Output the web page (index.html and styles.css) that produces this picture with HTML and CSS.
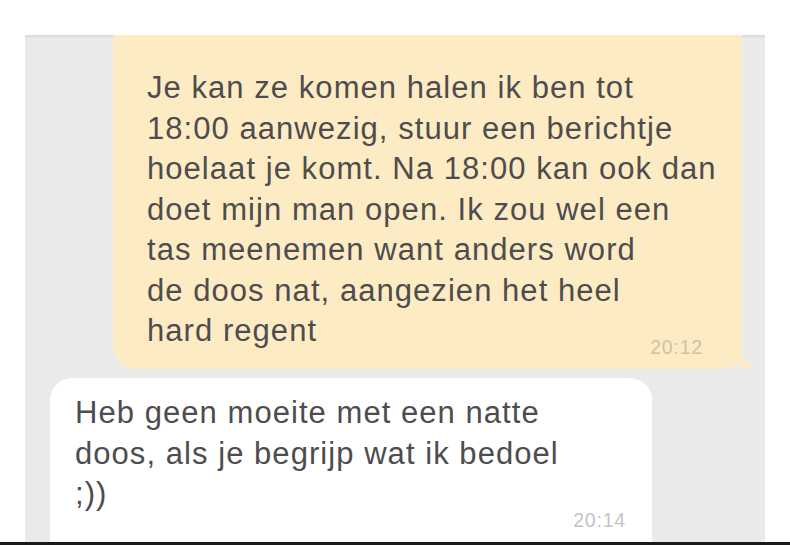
FILE: index.html
```html
<!DOCTYPE html>
<html>
<head>
    <title>Berichten</title>
    <meta charset="utf-8" />
    <link rel="stylesheet" href="styles.css">
</head>
<body>
    <div class="screen">
        <div class="panel">
            <div class="bubble sent">
                <p class="text">Je kan ze komen halen ik ben tot<br>18:00 aanwezig, stuur een berichtje<br>hoelaat je komt. Na 18:00 kan ook dan<br>doet mijn man open. Ik zou wel een<br>tas meenemen want anders word<br>de doos nat, aangezien het heel<br>hard regent</p>
                <span class="time">20:12</span>
            </div>
            <div class="bubble received">
                <p class="text">Heb geen moeite met een natte<br>doos, als je begrijp wat ik bedoel<br>;))</p>
                <span class="time">20:14</span>
            </div>
        </div>
        <div class="bottom-line"></div>
    </div>
</body>
</html>
```
FILE: styles.css
```css
body {
    margin: 0;
    background-color: #fff;
    font-family: 'Liberation Sans', Arial, sans-serif;
}
.screen {
    height: 545px;
    display: flex;
    flex-direction: column;
    padding-top: 35px;
    box-sizing: border-box;
}
.panel {
    flex: 1;
    margin: 0 25px;
    background-color: #ebeaeb;
    box-shadow: inset 0 4px 3px -2px rgba(0, 0, 0, 0.08);
    overflow: hidden;
    display: flex;
    flex-direction: column;
}
.bubble {
    position: relative;
    box-sizing: border-box;
}
.text {
    margin: 0;
    font-size: 31px;
    letter-spacing: 1.05px;
    line-height: 40.5px;
    color: #4d4d4f;
    white-space: nowrap;
}
.time {
    display: block;
    text-align: right;
    font-size: 19.5px;
    letter-spacing: 0.8px;
    line-height: 22px;
}
.sent {
    margin-left: 88px;
    width: 629px;
    height: 334px;
    background-color: #fdebc3;
    border-radius: 0 0 18px 22px;
    padding: 33px 39px 0 34px;
}
.sent .time {
    margin-top: -16px;
    color: #cfc3a5;
}
.sent::after {
    content: "";
    position: absolute;
    right: -13px;
    bottom: 0;
    width: 26px;
    height: 22px;
    background-color: #fdebc3;
    border-radius: 0 0 4px 22px;
    clip-path: polygon(0 0, 100% 100%, 0 100%);
}
.received {
    margin: 9px 0 0 25px;
    width: 602px;
    flex: 1;
    background-color: #fff;
    border-radius: 22px 22px 0 0;
    padding: 15px 26px 0 25px;
}
.received .time {
    margin-top: -6px;
    color: #c4c4c4;
}
.bottom-line {
    height: 3px;
    background-color: #1a1a1a;
}
```
